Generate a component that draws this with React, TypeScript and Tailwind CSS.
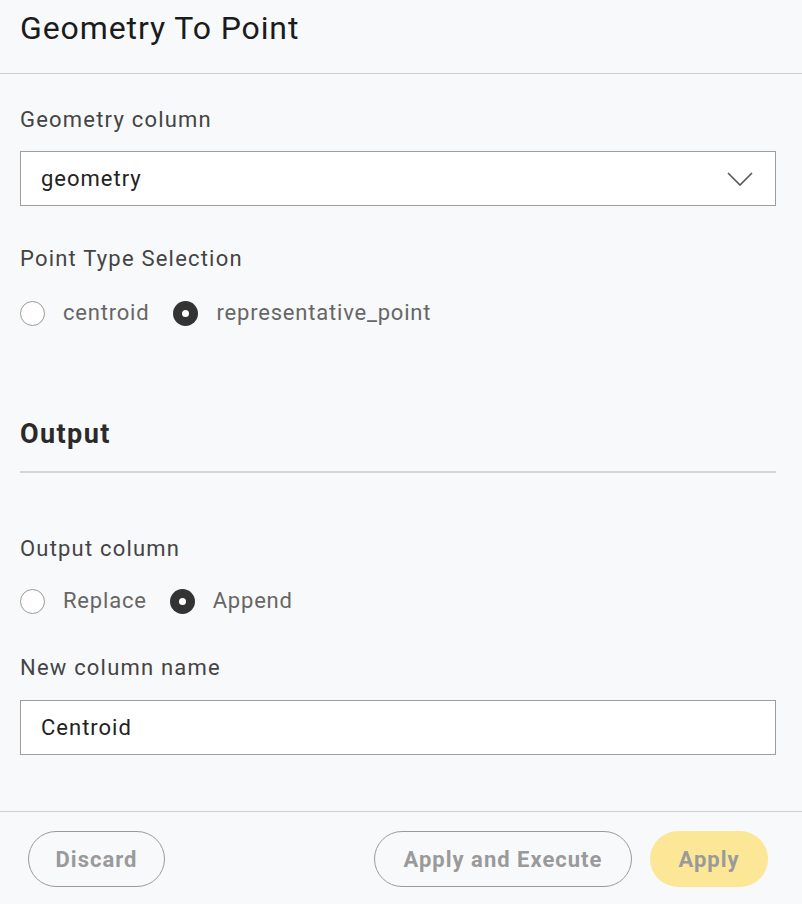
import { useState } from "react";

function Radio({ checked, label, onClick }: { checked: boolean; label: string; onClick: () => void }) {
  return (
    <button type="button" onClick={onClick} className="flex items-center gap-[18px] text-left">
      {checked ? (
        <span className="grid h-[25px] w-[25px] place-items-center rounded-full bg-[#333]">
          <span className="h-[7px] w-[7px] rounded-full bg-white" />
        </span>
      ) : (
        <span className="h-[25px] w-[25px] rounded-full border-[1.5px] border-[#9a9a9a] bg-white" />
      )}
      <span className="text-[22px] leading-[28px] tracking-[0.8px] text-[#666]">{label}</span>
    </button>
  );
}

export default function App() {
  const [pointType, setPointType] = useState("representative_point");
  const [mode, setMode] = useState("Append");
  const [name, setName] = useState("Centroid");

  return (
    <div className="flex h-[904px] w-[802px] flex-col bg-[#f8f9fb] font-['Roboto',sans-serif]">
      <header className="flex h-[74px] items-start border-b border-[#cfcfcf] px-5 pt-[8px]">
        <h1 className="text-[32px] leading-[40px] tracking-[0.9px] text-[#1b1b1b]">Geometry To Point</h1>
      </header>

      <main className="flex flex-1 flex-col pl-5 pr-[26px]">
        <label className="mt-[32px] text-[22px] leading-[28px] tracking-[1.2px] text-[#444]">Geometry column</label>
        <div className="mt-[17px] flex h-[55px] items-center justify-between border border-[#9e9e9e] bg-white pl-5 pr-[22px]">
          <span className="text-[22px] tracking-[1px] text-[#222]">geometry</span>
          <svg width="26" height="14" viewBox="0 0 26 14" fill="none">
            <path d="M1 1l12 12L25 1" stroke="#555" strokeWidth="1.6" />
          </svg>
        </div>

        <label className="mt-[39px] text-[22px] leading-[28px] tracking-[1.2px] text-[#444]">Point Type Selection</label>
        <div className="mt-[26px] flex items-center gap-[24px]">
          <Radio checked={pointType === "centroid"} label="centroid" onClick={() => setPointType("centroid")} />
          <Radio
            checked={pointType === "representative_point"}
            label="representative_point"
            onClick={() => setPointType("representative_point")}
          />
        </div>

        <h2 className="mt-[92px] text-[27px] font-bold leading-[31px] tracking-[1.4px] text-[#2a2a2a]">Output</h2>
        <div className="mt-[21px] h-[2px] bg-[#d6d6d6]" />

        <label className="mt-[62px] text-[22px] leading-[28px] tracking-[1.2px] text-[#444]">Output column</label>
        <div className="mt-[24px] flex items-center gap-[23px]">
          <Radio checked={mode === "Replace"} label="Replace" onClick={() => setMode("Replace")} />
          <Radio checked={mode === "Append"} label="Append" onClick={() => setMode("Append")} />
        </div>

        <label className="mt-[39px] text-[22px] leading-[28px] tracking-[1.2px] text-[#444]">New column name</label>
        <input
          value={name}
          onChange={(e) => setName(e.target.value)}
          className="mt-[18px] h-[55px] border border-[#9e9e9e] bg-white px-5 text-[22px] tracking-[1px] text-[#222] outline-none"
        />
      </main>

      <footer className="flex h-[93px] items-start justify-between border-t border-[#cfcfcf] pl-7 pr-[34px] pt-[19px]">
        <button className="h-[56px] w-[137px] rounded-full border border-[#9a9a9a] text-[22px] font-bold tracking-[1px] text-[#9a9a9a]">
          Discard
        </button>
        <div className="flex gap-[18px]">
          <button className="h-[56px] w-[258px] rounded-full border border-[#9a9a9a] text-[22px] font-bold tracking-[1px] text-[#9a9a9a]">
            Apply and Execute
          </button>
          <button className="h-[56px] w-[118px] rounded-full bg-[#fbe796] text-[22px] font-bold tracking-[1px] text-[#9a9a9a]">
            Apply
          </button>
        </div>
      </footer>
    </div>
  );
}
